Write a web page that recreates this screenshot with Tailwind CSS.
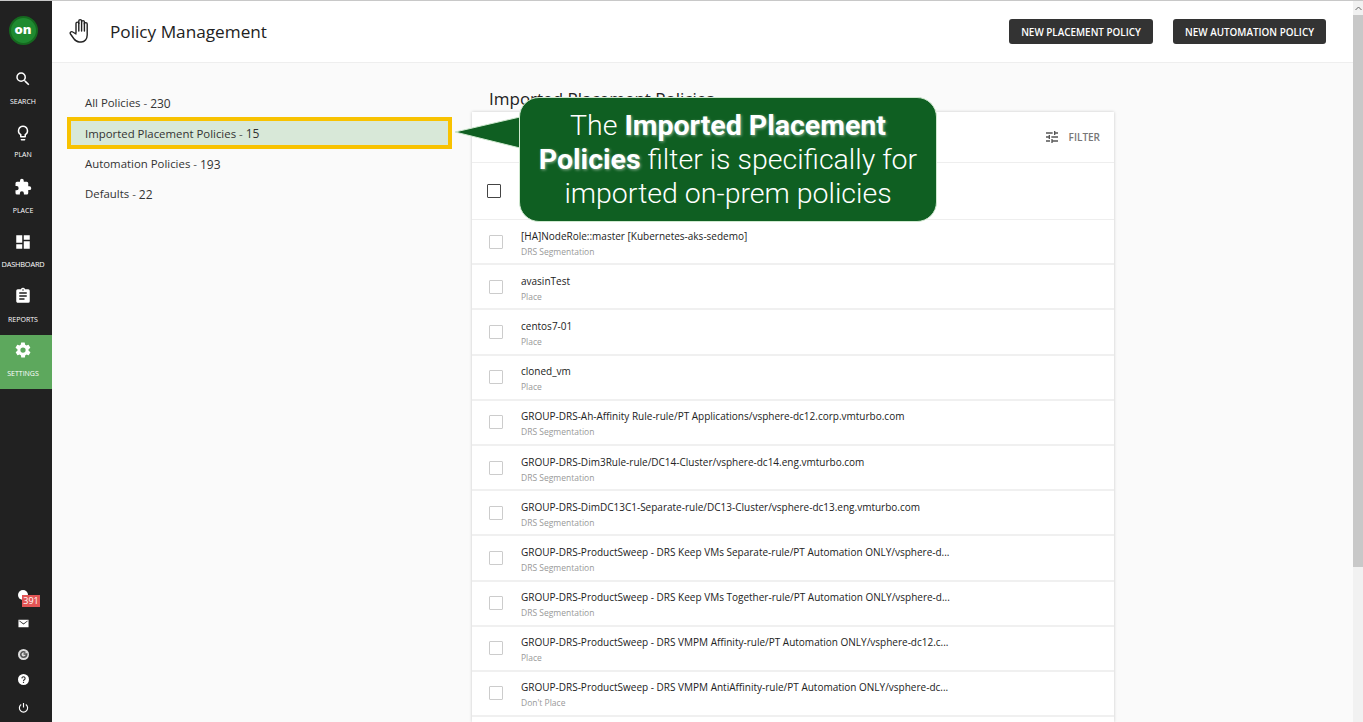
<!doctype html>
<html><head><meta charset="utf-8"><script src="https://cdn.jsdelivr.net/npm/@tailwindcss/browser@4"></script></head>
<body class="overflow-hidden">
<div class="relative w-[1363px] h-[722px] overflow-hidden flex flex-col bg-[#fafafa] font-['Open_Sans',sans-serif] text-[#222]">
  <div class="h-px bg-[#c8c8c8] shrink-0"></div>
  <div class="flex flex-1 min-h-0">
    <aside class="relative w-[52px] shrink-0 bg-[#212121] flex flex-col text-white">
      <div class="h-[62px] flex items-start justify-center pt-[15px] pr-[6px] shrink-0">
        <div class="w-[29px] h-[29px] rounded-full bg-[#1f8a30] border-2 border-[#15691f] flex items-center justify-center text-[13px] font-extrabold leading-none pb-[2px]">on</div>
      </div>
      <div class="h-[54.4px] flex flex-col items-center pt-[6.5px] pr-[6px] gap-[9px]">
        <svg class="w-[18px] h-[18px]" viewBox="0 0 24 24" fill="#fff"><path d="M15.5 14h-.79l-.28-.27A6.471 6.471 0 0 0 16 9.5 6.5 6.5 0 1 0 9.5 16c1.61 0 3.09-.59 4.23-1.57l.27.28v.79l5 4.99L20.49 19l-4.99-5zm-6 0C7.01 14 5 11.99 5 9.5S7.01 5 9.5 5 14 7.01 14 9.5 11.99 14 9.5 14z"/></svg>
        <span class="text-[7px] leading-[10px]">SEARCH</span>
      </div>
      <div class="h-[54.4px] flex flex-col items-center pt-[6.5px] pr-[6px] gap-[8px]">
        <svg class="w-[18px] h-[18px]" viewBox="0 0 24 24" fill="#fff"><path d="M9 21c0 .6.4 1 1 1h4c.6 0 1-.4 1-1v-1H9v1zm3-19a7 7 0 0 0-4 12.7V17c0 .6.4 1 1 1h6c.6 0 1-.4 1-1v-2.300A7 7 0 0 0 12 2zm2.900 11.100-.9.6V16h-4v-2.300l-.9-.6a5 5 0 1 1 5.800 0z"/></svg>
        <span class="text-[7px] leading-[10px]">PLAN</span>
      </div>
      <div class="h-[54.4px] flex flex-col items-center pt-[6.5px] pr-[6px] gap-[10px]">
        <svg class="w-[18px] h-[18px]" viewBox="0 0 24 24" fill="#fff"><path d="M20.500 11H19V7a2 2 0 0 0-2-2h-4V3.500a2.500 2.500 0 0 0-5 0V5H4a2 2 0 0 0-2 2v3.800h1.500a2.700 2.700 0 0 1 0 5.400H2V20a2 2 0 0 0 2 2h3.800v-1.500a2.700 2.700 0 0 1 5.400 0V22H17a2 2 0 0 0 2-2v-4h1.500a2.500 2.500 0 0 0 0-5z"/></svg>
        <span class="text-[7px] leading-[10px]">PLACE</span>
      </div>
      <div class="h-[54.4px] flex flex-col items-center pt-[6.5px] pr-[6px] gap-[8px]">
        <svg class="w-[18px] h-[18px]" viewBox="0 0 24 24" fill="#fff"><path d="M3 13h8V3H3v10zm0 8h8v-6H3v6zm10 0h8V11h-8v10zm0-18v6h8V3h-8z"/></svg>
        <span class="text-[7.400px] leading-[10px] tracking-[-0.2px]">DASHBOARD</span>
      </div>
      <div class="h-[54.4px] flex flex-col items-center pt-[6.5px] pr-[6px] gap-[10px]">
        <svg class="w-[18px] h-[18px]" viewBox="0 0 24 24" fill="#fff"><path d="M19 3h-4.200a3 3 0 0 0-5.600 0H5a2 2 0 0 0-2 2v14c0 1.100.9 2 2 2h14a2 2 0 0 0 2-2V5a2 2 0 0 0-2-2zm-7 0a1 1 0 1 1 0 2 1 1 0 0 1 0-2zm2 14H7v-2h7v2zm3-4H7v-2h10v2zm0-4H7V7h10v2z"/></svg>
        <span class="text-[7px] leading-[10px]">REPORTS</span>
      </div>
      <div class="h-[54.4px] bg-[#5da85d] flex flex-col items-center pt-[6.5px] pr-[6px] gap-[10px]">
        <svg class="w-[18px] h-[18px]" viewBox="0 0 24 24" fill="#fff"><path d="M19.400 13a7.500 7.500 0 0 0 0-2l2.100-1.600a.5.5 0 0 0 .1-.6l-2-3.500a.5.5 0 0 0-.6-.2l-2.500 1a7.300 7.300 0 0 0-1.700-1l-.4-2.700a.5.5 0 0 0-.5-.4h-4a.5.5 0 0 0-.5.4l-.4 2.700c-.6.2-1.200.6-1.700 1l-2.500-1a.5.5 0 0 0-.6.2l-2 3.500a.5.5 0 0 0 .1.600L4.600 11a8 8 0 0 0 0 2l-2.100 1.600a.5.5 0 0 0-.1.600l2 3.500c.1.200.4.300.6.200l2.500-1c.5.400 1.100.8 1.700 1l.4 2.700c0 .2.200.4.500.4h4c.3 0 .5-.2.500-.4l.4-2.700c.6-.2 1.200-.6 1.700-1l2.500 1c.2.100.5 0 .6-.2l2-3.500a.5.5 0 0 0-.1-.6L19.400 13zM12 15.500a3.500 3.500 0 1 1 0-7 3.500 3.500 0 0 1 0 7z"/></svg>
        <span class="text-[7px] leading-[10px]">SETTINGS</span>
      </div>
      <div class="mt-auto flex flex-col items-center pr-[6px]">
        <div class="relative h-[28px] w-[46px] flex justify-center items-center">
          <div class="w-[10px] h-[10px] rounded-full bg-white translate-y-[5px]"></div>
          <span class="absolute left-[22px] top-[19px] w-[18px] text-center bg-[#e25555] text-white text-[9px] leading-[12px]">391</span>
        </div>
        <div class="h-[38px] flex items-center">
          <svg class="w-[11px] h-[11px]" viewBox="0 0 24 24" fill="#fff"><path d="M1 4h22v16H1V4zm11 10 9-7V5.500l-9 6.500-9-6.500V7l9 7z"/></svg>
        </div>
        <div class="h-[24px] flex items-center">
          <svg class="w-[11px] h-[11px]" viewBox="0 0 24 24"><circle cx="12" cy="12" r="12" fill="#ddd"/><path d="M12 11h7c0 5-3 7-7 7a6 6 0 1 1 4.200-10.300" fill="none" stroke="#555" stroke-width="3.500"/></svg>
        </div>
        <div class="h-[26px] flex items-center">
          <svg class="w-[11px] h-[11px]" viewBox="0 0 24 24"><circle cx="12" cy="12" r="12" fill="#fff"/><path d="M8.500 9.500a3.500 3.500 0 1 1 5.500 3c-1.300.9-2 1.300-2 2.500M12 17v2.500" fill="none" stroke="#333" stroke-width="2.500"/></svg>
        </div>
        <div class="h-[30px] flex items-center">
          <svg class="w-[11px] h-[11px]" viewBox="0 0 24 24" fill="none" stroke="#fff" stroke-width="2.500"><path d="M12 2v10M7 5.500a9 9 0 1 0 10 0"/></svg>
        </div>
      </div>
    </aside>
    <div class="flex-1 min-w-0 flex flex-col">
      <header class="h-[62px] shrink-0 bg-white border-b border-[#eee] flex items-center pl-[17px] pr-[27px]">
        <svg class="w-[24px] h-[26px] -translate-y-[1px]" viewBox="0 0 24 26" fill="none" stroke="#222" stroke-width="1.400" stroke-linejoin="round" stroke-linecap="round"><path d="M7 15V5.500a1.400 1.400 0 0 1 2.800 0V3a1.400 1.400 0 0 1 2.800 0v1a1.400 1.400 0 0 1 2.800 0v2a1.400 1.400 0 0 1 2.800 0v11c0 4-2.500 7-6 7h-2c-2.500 0-4-1.500-5.500-3.500L1.500 16c-1-1.500.8-3 2.300-2L7 16"/><path d="M9.800 5v8M12.600 4v9M15.400 5v8"/></svg>
        <h1 class="ml-[17px] text-[17.200px] leading-[26px] text-[#222]">Policy Management</h1>
        <div class="ml-auto flex gap-[20px]">
          <button class="w-[144px] h-[25px] pt-[2px] rounded-[3px] bg-[#333] text-white text-[9.900px] font-semibold">NEW PLACEMENT POLICY</button>
          <button class="w-[153px] h-[25px] pt-[2px] rounded-[3px] bg-[#333] text-white text-[9.900px] font-semibold">NEW AUTOMATION POLICY</button>
        </div>
      </header>
      <main class="flex-1 min-h-0 flex overflow-hidden">
        <nav class="w-[420px] shrink-0 pl-[16px] pt-[24.600px] text-[11.400px] text-[#333]">
          <div class="h-[30.400px] flex items-center pl-[17px]">All Policies&nbsp;<span class="text-[#555]">-</span>&nbsp;<span class="text-[12px] translate-y-[1px]">230</span></div>
          <div class="h-[30.400px] flex items-center pl-[17px] w-[384px] bg-[#d8e8d8]">Imported Placement Policies&nbsp;<span class="text-[#555]">-</span>&nbsp;<span class="text-[12px] translate-y-[1px]">15</span></div>
          <div class="h-[30.400px] flex items-center pl-[17px]">Automation Policies&nbsp;<span class="text-[#555]">-</span>&nbsp;<span class="text-[12px] translate-y-[1px]">193</span></div>
          <div class="h-[30.400px] flex items-center pl-[17px]">Defaults&nbsp;<span class="text-[#555]">-</span>&nbsp;<span class="text-[12px] translate-y-[1px]">22</span></div>
        </nav>
        <section class="w-[642px] shrink-0 flex flex-col">
          <h2 class="h-[49px] shrink-0 pl-[17px] pt-[24px] text-[17px] leading-[24px]">Imported Placement Policies</h2>
          <div class="flex-1 bg-white shadow-[0_0_3px_rgba(0,0,0,0.2)]">
            <div class="h-[51px] border-b border-[#eee] flex items-center justify-end pr-[14px] gap-[9px] text-[#777]">
              <svg class="w-[16px] h-[16px]" viewBox="0 0 24 24" fill="#555"><path d="M3 17v2h6v-2H3zM3 5v2h10V5H3zm10 16v-2h8v-2h-8v-2h-2v6h2zM7 9v2H3v2h4v2h2V9H7zm14 4v-2H11v2h10zm-6-4h2V7h4V5h-4V3h-2v6z"/></svg>
              <span class="text-[10px] font-semibold">FILTER</span>
            </div>
            <div class="h-[57px] border-b border-[#eee] flex items-center pl-[15px]">
              <div class="w-[14px] h-[14px] border-[1.500px] border-[#444] rounded-[1px]"></div>
            </div>
            <div class="flex flex-col">
              <div class="h-[45.200px] border-b-2 border-[#f0f0f0] flex items-center pl-[17px]"><div class="w-[14px] h-[14px] border border-[#ccc] rounded-[1px] shrink-0"></div><div class="ml-[18px] pt-[4px]"><div class="text-[10px] leading-[15px] text-[#222]">[HA]NodeRole::master [Kubernetes-aks-sedemo]</div><div class="mt-[1px] text-[8.500px] leading-[14px] text-[#999]">DRS Segmentation</div></div></div>
              <div class="h-[45.200px] border-b-2 border-[#f0f0f0] flex items-center pl-[17px]"><div class="w-[14px] h-[14px] border border-[#ccc] rounded-[1px] shrink-0"></div><div class="ml-[18px] pt-[4px]"><div class="text-[10px] leading-[15px] text-[#222]">avasinTest</div><div class="mt-[1px] text-[8.500px] leading-[14px] text-[#999]">Place</div></div></div>
              <div class="h-[45.200px] border-b-2 border-[#f0f0f0] flex items-center pl-[17px]"><div class="w-[14px] h-[14px] border border-[#ccc] rounded-[1px] shrink-0"></div><div class="ml-[18px] pt-[4px]"><div class="text-[10px] leading-[15px] text-[#222]">centos7-01</div><div class="mt-[1px] text-[8.500px] leading-[14px] text-[#999]">Place</div></div></div>
              <div class="h-[45.200px] border-b-2 border-[#f0f0f0] flex items-center pl-[17px]"><div class="w-[14px] h-[14px] border border-[#ccc] rounded-[1px] shrink-0"></div><div class="ml-[18px] pt-[4px]"><div class="text-[10px] leading-[15px] text-[#222]">cloned_vm</div><div class="mt-[1px] text-[8.500px] leading-[14px] text-[#999]">Place</div></div></div>
              <div class="h-[45.200px] border-b-2 border-[#f0f0f0] flex items-center pl-[17px]"><div class="w-[14px] h-[14px] border border-[#ccc] rounded-[1px] shrink-0"></div><div class="ml-[18px] pt-[4px]"><div class="text-[10px] leading-[15px] text-[#222]">GROUP-DRS-Ah-Affinity Rule-rule/PT Applications/vsphere-dc12.corp.vmturbo.com</div><div class="mt-[1px] text-[8.500px] leading-[14px] text-[#999]">DRS Segmentation</div></div></div>
              <div class="h-[45.200px] border-b-2 border-[#f0f0f0] flex items-center pl-[17px]"><div class="w-[14px] h-[14px] border border-[#ccc] rounded-[1px] shrink-0"></div><div class="ml-[18px] pt-[4px]"><div class="text-[10px] leading-[15px] text-[#222]">GROUP-DRS-Dim3Rule-rule/DC14-Cluster/vsphere-dc14.eng.vmturbo.com</div><div class="mt-[1px] text-[8.500px] leading-[14px] text-[#999]">DRS Segmentation</div></div></div>
              <div class="h-[45.200px] border-b-2 border-[#f0f0f0] flex items-center pl-[17px]"><div class="w-[14px] h-[14px] border border-[#ccc] rounded-[1px] shrink-0"></div><div class="ml-[18px] pt-[4px]"><div class="text-[10px] leading-[15px] text-[#222]">GROUP-DRS-DimDC13C1-Separate-rule/DC13-Cluster/vsphere-dc13.eng.vmturbo.com</div><div class="mt-[1px] text-[8.500px] leading-[14px] text-[#999]">DRS Segmentation</div></div></div>
              <div class="h-[45.200px] border-b-2 border-[#f0f0f0] flex items-center pl-[17px]"><div class="w-[14px] h-[14px] border border-[#ccc] rounded-[1px] shrink-0"></div><div class="ml-[18px] pt-[4px]"><div class="text-[10px] leading-[15px] text-[#222]">GROUP-DRS-ProductSweep - DRS Keep VMs Separate-rule/PT Automation ONLY/vsphere-d...</div><div class="mt-[1px] text-[8.500px] leading-[14px] text-[#999]">DRS Segmentation</div></div></div>
              <div class="h-[45.200px] border-b-2 border-[#f0f0f0] flex items-center pl-[17px]"><div class="w-[14px] h-[14px] border border-[#ccc] rounded-[1px] shrink-0"></div><div class="ml-[18px] pt-[4px]"><div class="text-[10px] leading-[15px] text-[#222]">GROUP-DRS-ProductSweep - DRS Keep VMs Together-rule/PT Automation ONLY/vsphere-d...</div><div class="mt-[1px] text-[8.500px] leading-[14px] text-[#999]">DRS Segmentation</div></div></div>
              <div class="h-[45.200px] border-b-2 border-[#f0f0f0] flex items-center pl-[17px]"><div class="w-[14px] h-[14px] border border-[#ccc] rounded-[1px] shrink-0"></div><div class="ml-[18px] pt-[4px]"><div class="text-[10px] leading-[15px] text-[#222]">GROUP-DRS-ProductSweep - DRS VMPM Affinity-rule/PT Automation ONLY/vsphere-dc12.c...</div><div class="mt-[1px] text-[8.500px] leading-[14px] text-[#999]">Place</div></div></div>
              <div class="h-[45.200px] border-b-2 border-[#f0f0f0] flex items-center pl-[17px]"><div class="w-[14px] h-[14px] border border-[#ccc] rounded-[1px] shrink-0"></div><div class="ml-[18px] pt-[4px]"><div class="text-[10px] leading-[15px] text-[#222]">GROUP-DRS-ProductSweep - DRS VMPM AntiAffinity-rule/PT Automation ONLY/vsphere-dc...</div><div class="mt-[1px] text-[8.500px] leading-[14px] text-[#999]">Don't Place</div></div></div>
            </div>
          </div>
        </section>
      </main>
    </div>
    <div class="w-[10px] shrink-0 bg-[#f1f1f1] flex flex-col">
      <div class="h-[14px] flex items-center justify-center"><svg class="w-[7px] h-[5px]" viewBox="0 0 7 5" fill="none" stroke="#666"><path d="M.5 4 3.500 1 6.500 4"/></svg></div>
      <div class="h-[552px] bg-[#c8c8c8]"></div>
    </div>
  </div>
  <div class="absolute left-[67px] top-[117px] w-[385px] h-[32px] border-[4px] border-[#f8c200]"></div>
  <svg class="absolute left-[452px] top-[112px] w-[72px] h-[42px]" viewBox="0 0 72 42"><path d="M3 20 68 5V36Z" fill="#0f5f22" stroke="#cfe8cf" stroke-width="1"/></svg>
  <div class="absolute left-[519px] top-[97px] w-[418px] h-[125px] rounded-[20px] bg-[#0f5f22] border border-[#cfe8cf] flex items-center justify-center text-center text-white font-['Roboto',sans-serif] font-light text-[28.500px] leading-[34px]">
    <p>The <b class="font-bold [text-shadow:1px_1px_3px_rgba(255,255,255,0.5)]">Imported Placement<br>Policies</b> filter is specifically for<br>imported on-prem policies</p>
  </div>
</div>
</body></html>
